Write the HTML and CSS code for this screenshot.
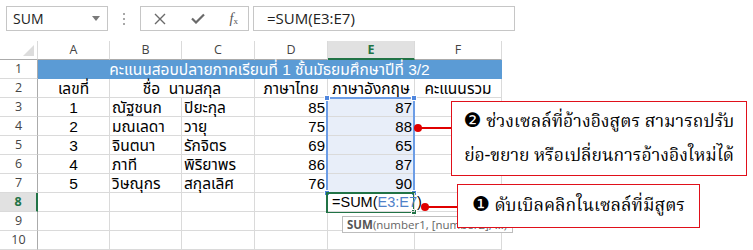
FILE: index.html
```html
<!DOCTYPE html>
<html lang="th">
<head>
    <meta charset="UTF-8">
    <title>SUM formula</title>
    <link rel="stylesheet" href="styles.css">
</head>
<body>
    <div class="toolbar">
        <div class="namebox">
            <span>SUM</span>
            <svg class="drop" width="8" height="5" viewBox="0 0 8 5"><path d="M0 0h8L4 5z" fill="#7a7a7a"/></svg>
        </div>
        <div class="grip">
            <svg width="3" height="12" viewBox="0 0 3 12"><rect x="0" y="0" width="2" height="2" fill="#a8a8a8"/><rect x="0" y="5" width="2" height="2" fill="#a8a8a8"/><rect x="0" y="10" width="2" height="2" fill="#a8a8a8"/></svg>
        </div>
        <div class="fxbuttons">
            <svg width="12" height="12" viewBox="0 0 12 12"><path d="M1 1L11 11M11 1L1 11" stroke="#6a6a6a" stroke-width="1.4" fill="none"/></svg>
            <svg width="14" height="11" viewBox="0 0 14 11"><path d="M1 5.5L5 9.5L13 1.5" stroke="#6a6a6a" stroke-width="2.2" fill="none"/></svg>
            <span class="fx"><i>f</i><sub>x</sub></span>
        </div>
        <div class="formula">=SUM(E3:E7)</div>
    </div>

    <div class="sheet">
        <div class="grid">
            <div class="corner"></div>
            <div class="colhead">A</div>
            <div class="colhead">B</div>
            <div class="colhead">C</div>
            <div class="colhead">D</div>
            <div class="colhead active">E</div>
            <div class="colhead">F</div>

            <div class="rowhead">1</div>
            <div class="cell title">คะแนนสอบปลายภาคเรียนที่ 1 ชั้นมัธยมศึกษาปีที่ 3/2</div>

            <div class="rowhead">2</div>
            <div class="cell center">เลขที่</div>
            <div class="cell center span2">ชื่อ&nbsp; นามสกุล</div>
            <div class="cell center">ภาษาไทย</div>
            <div class="cell center">ภาษาอังกฤษ</div>
            <div class="cell center">คะแนนรวม</div>

            <div class="rowhead">3</div>
            <div class="cell center">1</div>
            <div class="cell">ณัฐชนก</div>
            <div class="cell">ปิยะกุล</div>
            <div class="cell num">85</div>
            <div class="cell num picked">87</div>
            <div class="cell"></div>

            <div class="rowhead">4</div>
            <div class="cell center">2</div>
            <div class="cell">มณเลดา</div>
            <div class="cell">วายุ</div>
            <div class="cell num">75</div>
            <div class="cell num picked">88</div>
            <div class="cell"></div>

            <div class="rowhead">5</div>
            <div class="cell center">3</div>
            <div class="cell">จินตนา</div>
            <div class="cell">รักจิตร</div>
            <div class="cell num">69</div>
            <div class="cell num picked">65</div>
            <div class="cell"></div>

            <div class="rowhead">6</div>
            <div class="cell center">4</div>
            <div class="cell">ภาที</div>
            <div class="cell">พิริยาพร</div>
            <div class="cell num">86</div>
            <div class="cell num picked">87</div>
            <div class="cell"></div>

            <div class="rowhead">7</div>
            <div class="cell center">5</div>
            <div class="cell">วิษณุกร</div>
            <div class="cell">สกุลเลิศ</div>
            <div class="cell num">76</div>
            <div class="cell num picked">90</div>
            <div class="cell"></div>

            <div class="rowhead active">8</div>
            <div class="cell"></div>
            <div class="cell"></div>
            <div class="cell"></div>
            <div class="cell"></div>
            <div class="cell editing">=SUM(<span class="ref">E3:E7</span>)</div>
            <div class="cell"></div>

            <div class="rowhead">9</div>
            <div class="cell"></div>
            <div class="cell"></div>
            <div class="cell"></div>
            <div class="cell"></div>
            <div class="cell"></div>
            <div class="cell"></div>

            <div class="rowhead">10</div>
            <div class="cell"></div>
            <div class="cell"></div>
            <div class="cell"></div>
            <div class="cell"></div>
            <div class="cell"></div>
            <div class="cell"></div>
        </div>

        <!-- highlighted reference range E3:E7 -->
        <div class="range">
            <span class="handle tl"></span><span class="handle tr"></span>
            <span class="handle bl"></span><span class="handle br"></span>
        </div>
        <!-- active cell E8 -->
        <div class="active-cell"><span class="fill"></span></div>

        <div class="tip"><b>SUM</b>(number1, [number2], ...)</div>

        <div class="link link-range"><span class="dot"></span></div>
        <div class="link link-cell"><span class="dot"></span></div>

        <div class="note note-range"><span class="badge">❷</span> ช่วงเซลล์ที่อ้างอิงสูตร สามารถปรับ<br>ย่อ-ขยาย หรือเปลี่ยนการอ้างอิงใหม่ได้</div>
        <div class="note note-cell"><span class="badge">❶</span> ดับเบิลคลิกในเซลล์ที่มีสูตร</div>
    </div>
</body>
</html>
```

FILE: styles.css
```css
body {
    margin: 0;
    background: #fff;
    width: 753px;
    height: 250px;
    overflow: hidden;
    font-family: "Liberation Sans", "Noto Sans Thai", Tahoma, sans-serif;
}

/* formula bar */
.toolbar {
    height: 41px;
    box-sizing: border-box;
    padding: 6px 0 0 6px;
    display: flex;
    align-items: flex-start;
}
.namebox {
    width: 102px;
    height: 25px;
    box-sizing: border-box;
    border: 1px solid #c6c6c6;
    display: flex;
    align-items: center;
    justify-content: space-between;
    padding: 0 7px 0 6px;
    font-family: "Open Sans", sans-serif;
    font-size: 14px;
    color: #222;
}
.grip {
    width: 32px;
    height: 25px;
    display: flex;
    align-items: center;
    justify-content: center;
}
.fxbuttons {
    width: 109px;
    height: 25px;
    box-sizing: border-box;
    border: 1px solid #c6c6c6;
    display: flex;
    align-items: center;
    justify-content: space-between;
    padding: 0 10px 0 13px;
}
.fx {
    font-family: "Liberation Serif", serif;
    font-size: 14px;
    color: #555;
    line-height: 1;
}
.fx sub {
    font-size: 9px;
    vertical-align: -1px;
}
.formula {
    width: 262px;
    height: 25px;
    margin-left: 4px;
    box-sizing: border-box;
    border: 1px solid #c6c6c6;
    padding: 0 0 0 13px;
    line-height: 23px;
    font-family: "Open Sans", sans-serif;
    font-size: 15px;
    color: #222;
}

/* sheet */
.sheet {
    position: relative;
    height: 209px;
    overflow: hidden;
}
.grid {
    display: grid;
    grid-template-columns: 38px 72px 72px 73px 73px 87px 87px;
    grid-auto-rows: 19px;
    width: 502px;
}
.grid > div {
    box-sizing: border-box;
    border-right: 1px solid #dadada;
    border-bottom: 1px solid #dadada;
    white-space: nowrap;
}
.corner {
    position: relative;
    border-bottom-color: #ababab !important;
}
.corner::after {
    content: "";
    position: absolute;
    right: 3px;
    bottom: 3px;
    border-style: solid;
    border-width: 0 0 11px 11px;
    border-color: transparent transparent #dcdcdc transparent;
}
.colhead,
.rowhead {
    font-family: "Open Sans", sans-serif;
    font-size: 12.5px;
    color: #444;
    text-align: center;
    line-height: 18px;
}
.colhead {
    border-bottom-color: #ababab !important;
}
.rowhead {
    border-right-color: #ababab !important;
}
.colhead.active {
    background: #e1e1e1;
    border-bottom: 2px solid #217346 !important;
    color: #217346;
    font-weight: bold;
}
.rowhead.active {
    background: #e1e1e1;
    border-right: 2px solid #217346 !important;
    color: #217346;
    font-weight: bold;
}
.cell {
    font-size: 15.5px;
    line-height: 19px;
    color: #000;
    padding: 0 2px;
}
.title {
    grid-column: span 6;
    background: #5b9bd5;
    border-color: #5b9bd5 !important;
    color: #fff;
    text-align: center;
}
.span2 { grid-column: span 2; }
.center { text-align: center; }
.num { text-align: right; font-size: 15px; }
.picked { background: #e8eef9; }
.editing {
    overflow: visible;
    padding-left: 4px;
    font-size: 14.5px;
    position: relative;
    z-index: 1;
}
.ref { color: #4f81c9; }

/* overlays */
.range {
    position: absolute;
    left: 326px;
    top: 56px;
    width: 89px;
    height: 97px;
    box-sizing: border-box;
    border: 2px solid #6c9de6;
}
.handle {
    position: absolute;
    width: 6px;
    height: 6px;
    background: #4f86de;
    border: 1px solid #fff;
    box-sizing: border-box;
}
.tl { left: -4px; top: -4px; }
.tr { right: -4px; top: -4px; }
.bl { left: -4px; bottom: -4px; }
.br { right: -4px; bottom: -4px; }
.active-cell {
    position: absolute;
    left: 326px;
    top: 151px;
    width: 89px;
    height: 21px;
    box-sizing: border-box;
    border: 2px solid #217346;
}
.active-cell .fill {
    position: absolute;
    right: -4px;
    bottom: -4px;
    width: 6px;
    height: 6px;
    background: #217346;
    border: 1px solid #fff;
    box-sizing: border-box;
}
.tip {
    position: absolute;
    left: 342px;
    top: 175px;
    width: 171px;
    height: 17px;
    box-sizing: border-box;
    border: 1px solid #bdbdbd;
    background: #fff;
    padding-left: 4px;
    font-family: "Open Sans", sans-serif;
    font-size: 11.5px;
    line-height: 15px;
    color: #666;
    white-space: nowrap;
    overflow: hidden;
    z-index: 2;
}
.tip b { color: #555; }
.link {
    position: absolute;
    height: 2px;
    background: #e00000;
    z-index: 2;
}
.link .dot {
    position: absolute;
    left: -4px;
    top: -3px;
    width: 8px;
    height: 8px;
    border-radius: 50%;
    background: #e00000;
}
.link-range { left: 418px; top: 86px; width: 34px; }
.link-cell { left: 425px; top: 165px; width: 33px; }
.note {
    position: absolute;
    z-index: 3;
    box-sizing: border-box;
    border: 1.5px solid #e0101a;
    background: #fff;
    font-family: "Norasi", "TH Sarabun New", "Laksaman", "Noto Serif Thai", "Liberation Serif", serif;
    font-size: 17.5px;
    color: #000;
    text-align: center;
    white-space: nowrap;
}
.badge {
    font-family: "DejaVu Sans", sans-serif;
    font-size: 20px;
    line-height: 1;
}
.note-range {
    left: 451px;
    top: 60px;
    width: 296px;
    height: 75px;
    line-height: 34px;
    padding-top: 3px;
}
.note-cell {
    left: 457px;
    top: 143px;
    width: 243px;
    height: 44px;
    line-height: 42px;
}
```
